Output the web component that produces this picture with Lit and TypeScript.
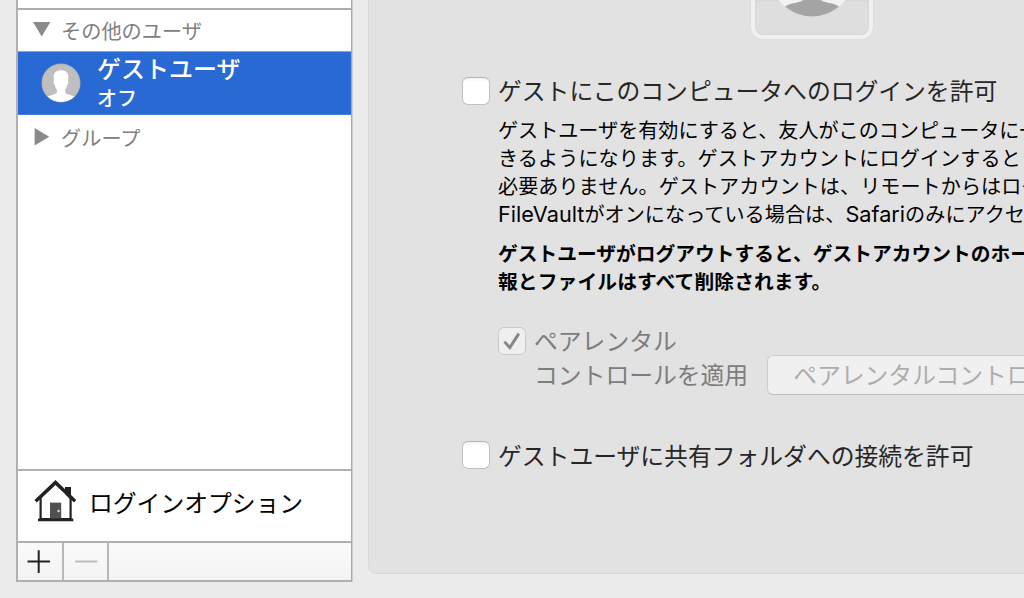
import { LitElement, html, css, svg } from "lit";
import { customElement, property } from "lit/decorators.js";

@customElement("check-box")
class CheckBox extends LitElement {
  @property({ type: Boolean, reflect: true }) checked = false;
  @property({ type: Boolean, reflect: true }) disabled = false;

  static styles = css`
    :host {
      display: block;
      flex: none;
      box-sizing: border-box;
      width: 28px;
      height: 28px;
      border: 1px solid #c2c2c2;
      border-top-color: #b2b2b2;
      border-radius: 6px;
      background: linear-gradient(#f4f4f4, #ffffff 4px);
    }
    :host([disabled]) {
      background: #efefef;
      border-color: #c9c9c9;
    }
    .mark {
      display: block;
    }
  `;

  render() {
    return this.checked
      ? html`<svg class="mark" width="26" height="26" viewBox="0 0 26 26">
          <path d="M5.4 13.6 L10.8 19.6 L19.8 5.6" fill="none" stroke="#868686" stroke-width="2.9" />
        </svg>`
      : null;
  }
}

@customElement("user-list")
class UserList extends LitElement {
  static styles = css`
    :host {
      display: flex;
      flex-direction: column;
      box-sizing: border-box;
      width: 336px;
      height: 582px;
      border: 2px solid #b0b0b0;
      border-top: 0;
      border-right: 1px solid #a8a8a8;
      box-shadow: 1px 0 0 #cdcdcd;
      background: #fff;
    }
    .previous {
      flex: none;
      height: 8px;
      border-bottom: 2px solid #adadad;
    }
    .list {
      flex: 1;
    }
    .section {
      display: flex;
      align-items: center;
      height: 41px;
      padding-left: 15px;
      color: #808080;
      font-size: 20.2px;
      line-height: 41px;
    }
    .section svg {
      flex: none;
      margin: -2px 10px 0 0;
    }
    .group {
      height: 45px;
      line-height: 45px;
    }
    .user {
      display: flex;
      box-sizing: border-box;
      height: 64px;
      padding: 11px 0 0 23px;
      border-top: 1px solid #82a3dc;
      border-bottom: 1px solid #3f7ee0;
      background: #2869d3;
      color: #fff;
    }
    .names {
      margin: -13px 0 0 16px;
    }
    .name {
      font-size: 24px;
      font-weight: 500;
      line-height: 36px;
    }
    .state {
      font-size: 20px;
      line-height: 23px;
      font-weight: 500;
    }
    .options {
      display: flex;
      align-items: center;
      height: 70px;
      border-top: 2px solid #b0b0b0;
      font-size: 23.8px;
      color: #000;
    }
    .house {
      margin: -10px 13px 0 16px;
    }
    .options-label {
      line-height: 36px;
      margin-top: -8px;
    }
    .tools {
      display: flex;
      height: 37px;
      border-top: 2px solid #b0b0b0;
      background: linear-gradient(#fafafa, #f3f3f3);
    }
    .tool {
      width: 43.5px;
      border-right: 2px solid #b8b8b8;
    }
    svg {
      display: block;
    }
  `;

  render() {
    return html`
      <div class="previous"></div>
      <div class="list">
        <div class="section">
          <svg width="18" height="18" viewBox="0 0 18 18"><path d="M0 1H17.4L8.7 15.5Z" fill="#8a8a8a" /></svg>
          <span>その他のユーザ</span>
        </div>
        <div class="user">
          <svg width="40" height="40" viewBox="0 0 40 40">
            <clipPath id="disc"><circle cx="20" cy="20" r="19" /></clipPath>
            <circle cx="20" cy="20" r="19.5" fill="#a3a9b5" />
            <circle cx="20" cy="20" r="18.8" fill="#bfbfbf" />
            <path
              clip-path="url(#disc)"
              fill="#fff"
              d="M20 7.3C24.8 7.3 27.5 9.8 27.3 14.2L27 17.8C27.7 18 27.5 20.8 26.2 22.1C25.8 24.3 25 25.5 24.2 26.5V29.2C24.5 31 29 32.2 34 33.4V40H6V33.4C11 32.2 15.5 31 15.8 29.2V26.5C15 25.5 14.2 24.3 13.8 22.1C12.5 20.8 12.3 18 13 17.8L12.7 14.2C12.5 9.8 15.2 7.3 20 7.3Z"
            />
          </svg>
          <div class="names">
            <div class="name">ゲストユーザ</div>
            <div class="state">オフ</div>
          </div>
        </div>
        <div class="section group">
          <svg width="18" height="18" viewBox="0 0 18 18"><path d="M1.6 0V17.4L16.2 8.7Z" fill="#8a8a8a" /></svg>
          <span>グループ</span>
        </div>
      </div>
      <div class="options">
        <svg class="house" width="42" height="44" viewBox="0 0 42 44">
          <path d="M6.6 18.5L21.5 4.5L36.6 18.5V40H6.6Z" fill="#fff" stroke="#222" stroke-width="2.2" />
          <path d="M31 8H37V21L31 15Z" fill="#222" />
          <path d="M1.6 22.2L21.5 3.4L41.2 22.2" fill="none" stroke="#222" stroke-width="3.3" />
          <path d="M4 39.4H39.3V42.2H4Z" fill="#222" />
          <path d="M16 23.6H27.2V39.5H16Z" fill="#505050" />
          <circle cx="24.6" cy="32" r="1.2" fill="#ddd" />
        </svg>
        <span class="options-label">ログインオプション</span>
      </div>
      <div class="tools">
        <div class="tool">
          <svg width="43" height="37" viewBox="0 0 43 37">
            <path d="M9.5 18.5H32M20.7 7.2V30" stroke="#222" stroke-width="2" />
          </svg>
        </div>
        <div class="tool">
          <svg width="43" height="37" viewBox="0 0 43 37"><path d="M11.3 18.5H33.3" stroke="#bcbcbc" stroke-width="2" /></svg>
        </div>
      </div>
    `;
  }
}

@customElement("guest-panel")
class GuestPanel extends LitElement {
  static styles = css`
    :host {
      display: block;
      box-sizing: border-box;
      height: 574px;
      border: 1px solid #dadada;
      border-width: 0 0 1px 1px;
      border-bottom-left-radius: 8px;
      background: #e2e2e2;
      padding-left: 93px;
      overflow: hidden;
      white-space: nowrap;
      color: #262626;
      font-size: 23.8px;
    }
    .picture {
      box-sizing: border-box;
      width: 122px;
      height: 39px;
      margin-left: 289px;
      border: 4px solid #f0f0f0;
      border-top: 0;
      border-radius: 0 0 12px 12px;
      background: #dedede;
      box-shadow: 0 0 1px #cfcfcf, inset 0 0 2px #cacaca;
    }
    .picture svg {
      display: block;
    }
    .row {
      display: flex;
      align-items: center;
      height: 28px;
      gap: 8px;
      line-height: 28px;
    }
    .allow {
      margin-top: 38px;
    }
    .allow span,
    .parental span {
      margin-top: -2px;
    }
    .note {
      margin: 11px 0 0 36px;
      color: #000;
      font-size: 20.1px;
      line-height: 28px;
    }
    .note div {
      height: 28px;
    }
    .loose {
      letter-spacing: 0.11px;
    }
    .airy {
      letter-spacing: 0.06px;
    }
    .latin {
      font-family: "Inter", sans-serif;
      font-size: 21.7px;
      line-height: 20px;
      letter-spacing: 0;
    }
    .warning {
      margin-top: 11px;
      font-size: 19.75px;
      font-weight: 700;
    }
    .parental {
      margin: 32px 0 0 36px;
      color: #7d7d7d;
    }
    .second {
      display: flex;
      height: 40px;
      margin: 0 0 0 72px;
      color: #7d7d7d;
      line-height: 37px;
    }
    .settings {
      flex: none;
      box-sizing: border-box;
      width: 340px;
      height: 40px;
      margin-left: 19px;
      padding-left: 25px;
      border: 1px solid #cdcdcd;
      border-bottom-color: #bcbcbc;
      border-radius: 6px;
      background: #f0f0f0;
      color: #adadad;
      line-height: 35px;
    }
    .share {
      margin-top: 46px;
    }
  `;

  render() {
    return html`
      <div class="picture">
        <svg width="114" height="18" viewBox="0 0 114 18">
          ${svg`
            <clipPath id="medallion"><circle cx="57" cy="-25.8" r="42.3" /></clipPath>
            <circle cx="57" cy="-25.8" r="42.3" fill="#f2f2f2" />
            <path clip-path="url(#medallion)" fill="#a4a4a4"
              d="M48 -4V0C46 2 42 2.4 38 3.3C34 4.3 31.5 5.6 29 7.2V18H85V7.2C82.5 5.6 80 4.3 76 3.3C72 2.4 68 2 66 0V-4Z" />
          `}
        </svg>
      </div>
      <div class="row allow"><check-box></check-box><span>ゲストにこのコンピュータへのログインを許可</span></div>
      <div class="note">
        <div>ゲストユーザを有効にすると、友人がこのコンピュータに一時的に</div>
        <div class="loose">きるようになります。ゲストアカウントにログインするときに</div>
        <div class="airy">必要ありません。ゲストアカウントは、リモートからはログイン</div>
        <div class="airy"><span class="latin">FileVault</span>がオンになっている場合は、<span class="latin">Safari</span>のみにアクセス</div>
      </div>
      <div class="note warning">
        <div>ゲストユーザがログアウトすると、ゲストアカウントのホーム</div>
        <div class="loose">報とファイルはすべて削除されます。</div>
      </div>
      <div class="row parental"><check-box checked disabled></check-box><span>ペアレンタル</span></div>
      <div class="second">
        <span>コントロールを適用</span>
        <div class="settings">ペアレンタルコントロール</div>
      </div>
      <div class="row share"><check-box></check-box><span>ゲストユーザに共有フォルダへの接続を許可</span></div>
    `;
  }
}

@customElement("app-root")
class AppRoot extends LitElement {
  static styles = css`
    :host {
      display: grid;
      grid-template-columns: 336px minmax(0, 1fr);
      column-gap: 16px;
      box-sizing: border-box;
      width: 1024px;
      height: 598px;
      padding-left: 16px;
      align-items: start;
      overflow: hidden;
      background: #ececec;
      font-family: "Noto Sans CJK JP", sans-serif;
    }
  `;

  render() {
    return html`<user-list></user-list><guest-panel></guest-panel>`;
  }
}
